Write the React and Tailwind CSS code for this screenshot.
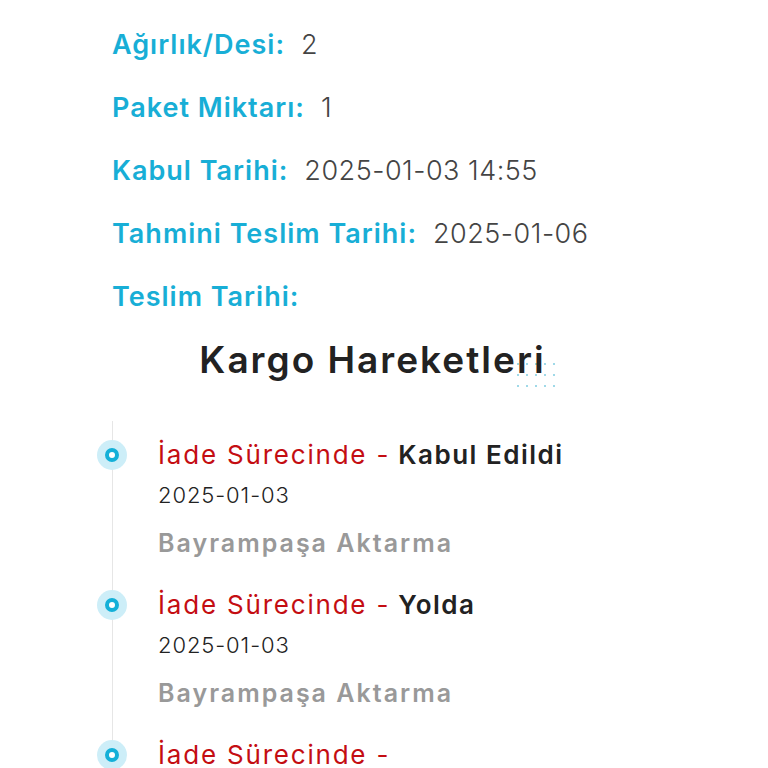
const font = { fontFamily: "Inter, 'Noto Sans', sans-serif" };

const details = [
  { label: "Ağırlık/Desi:", value: "2" },
  { label: "Paket Miktarı:", value: "1" },
  { label: "Kabul Tarihi:", value: "2025-01-03 14:55" },
  { label: "Tahmini Teslim Tarihi:", value: "2025-01-06" },
  { label: "Teslim Tarihi:", value: "" },
];

const moves = [
  { status: "Kabul Edildi", date: "2025-01-03", place: "Bayrampaşa Aktarma" },
  { status: "Yolda", date: "2025-01-03", place: "Bayrampaşa Aktarma" },
  { status: "", date: "2025-01-03", place: "Bayrampaşa Aktarma" },
];

function Dots() {
  return (
    <div className="absolute left-[318px] top-[27px] grid grid-cols-5 gap-x-[9px] gap-y-[9px]">
      {Array.from({ length: 15 }).map((_, i) => (
        <span key={i} className="w-[2px] h-[2px] rounded-full bg-[#7fcde0]" />
      ))}
    </div>
  );
}

export default function App() {
  return (
    <div className="w-[768px] h-[768px] overflow-hidden bg-white" style={font}>
      <div className="pl-[112px] pt-[28px] flex flex-col gap-[28px]">
        {details.map((d) => (
          <div key={d.label} className="flex items-center gap-[16px] h-[35px] text-[27px]">
            <span className="font-semibold text-[#18aed6] tracking-[1px]">{d.label}</span>
            <span className="font-light text-[#444] tracking-[0.5px]">{d.value}</span>
          </div>
        ))}
      </div>

      <div className="mt-[21px] flex justify-center pr-[23px]">
        <div className="relative">
          <Dots />
          <h2 className="relative text-[37px] font-semibold text-[#222] leading-[48px] tracking-[2px]">Kargo Hareketleri</h2>
        </div>
      </div>

      <div className="relative mt-[61px] ml-[112px]">
        <div className="absolute left-0 top-[-24px] bottom-0 w-px bg-[#e6e6e6]" />
        {moves.map((m, i) => (
          <div key={i} className="relative pl-[46px] h-[150px]">
            <div className="absolute left-[-15px] top-[-5px] w-[30px] h-[30px] rounded-full bg-[#cdeef8] flex items-center justify-center">
              <div className="w-[14px] h-[14px] rounded-full border-[4px] border-[#14b0d8] bg-white" />
            </div>
            <div className="text-[26px] leading-[20px] h-[20px] flex items-center whitespace-nowrap">
              <span className="text-[#c40d12] tracking-[1.8px]">İade Sürecinde -</span>
              {m.status && <span className="font-semibold text-[#222] ml-[8px] tracking-[1.5px]">{m.status}</span>}
            </div>
            <div className="mt-[20px] text-[22px] font-light text-[#222] leading-[20px] tracking-[0.9px]">{m.date}</div>
            <div className="mt-[28px] text-[25px] font-semibold text-[#999] leading-[20px] tracking-[2px]">{m.place}</div>
          </div>
        ))}
      </div>
    </div>
  );
}
